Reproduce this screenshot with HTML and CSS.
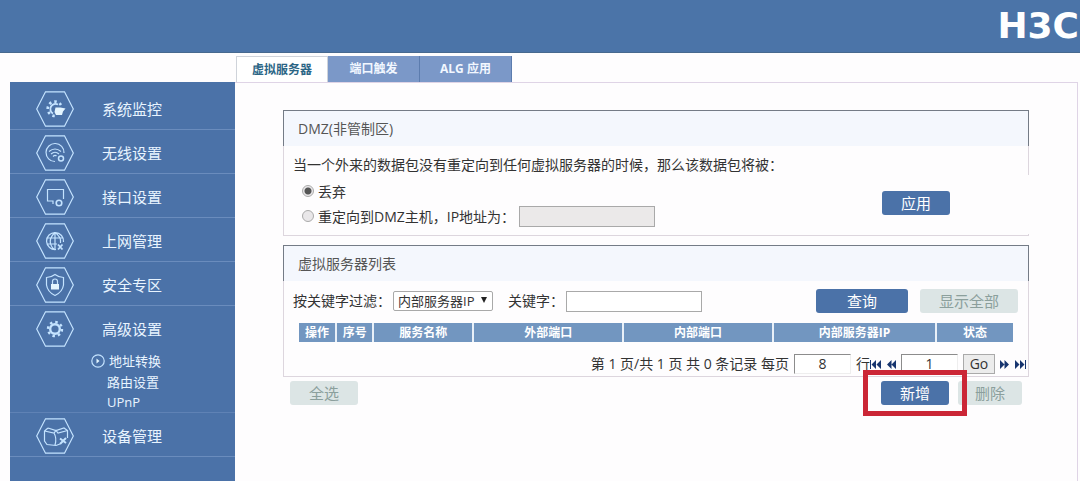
FILE: index.html
```html
<!DOCTYPE html>
<html lang="zh-CN">
<head>
<meta charset="utf-8">
<meta name="viewport" content="width=device-width, initial-scale=1">
<title>H3C</title>
<link rel="stylesheet" href="styles.css">
</head>
<body>
<svg width="0" height="0" class="defs" aria-hidden="true">
  <symbol id="hex" viewBox="0 0 38 36"><path d="M9.500 .8H28.500L37.300 18 28.500 35.200H9.500L.7 18Z"/></symbol>
  <symbol id="rewind" viewBox="0 0 9 9"><path d="M4.500 0V9L0 4.500ZM9 0V9L4.500 4.500Z"/></symbol>
  <symbol id="first" viewBox="0 0 11 9"><path d="M0 0H1V9H0ZM6 0V9L1.500 4.500ZM11 0V9L6.500 4.500Z"/></symbol>
</svg>
<header class="topbar"><span class="logo">H3C</span></header>
<nav class="tabs">
  <a href="#" class="tab active">虚拟服务器</a>
  <a href="#" class="tab">端口触发</a>
  <a href="#" class="tab">ALG 应用</a>
</nav>
<div class="layout">
  <nav class="sidebar">
    <a href="#" class="item">
      <svg class="hex" viewBox="0 0 38 36"><use href="#hex"/><path stroke-width="1.800" d="M22 13.500A5 5 0 1 0 17 22.500"/><path stroke-width="2.600" stroke-dasharray="2.400 3" d="M25 14A7.200 7.200 0 1 0 19 25"/><path class="solid" d="M19.500 16.500h5l5 1-2.500 3-1 3.500h-6l-1.500-3z"/></svg>
      <span>系统监控</span></a>
    <a href="#" class="item">
      <svg class="hex" viewBox="0 0 38 36"><use href="#hex"/><path d="M19 26.500A9 9 0 1 1 28 18M13 16.500Q19 11.500 25 16.500M15 19Q19 15.500 23 19M17 21.500Q19 19.500 20.500 21"/><circle cx="25" cy="23.500" r="2.500" stroke-width="1.500"/></svg>
      <span>无线设置</span></a>
    <a href="#" class="item">
      <svg class="hex" viewBox="0 0 38 36"><use href="#hex"/><path d="M17 25v-3h-5.500V10.500h16V20"/><circle cx="23" cy="24" r="2.800" stroke-width="1.600"/></svg>
      <span>接口设置</span></a>
    <a href="#" class="item">
      <svg class="hex" viewBox="0 0 38 36"><use href="#hex"/><path d="M20 26.500A8.500 8.500 0 1 1 27.500 19M19 9.500V26M11 15H27M11 21H21M19 9.500Q10 18 18 26.500M19 9.500Q25.500 14 24.500 20"/><path stroke-width="1.800" d="M22 21.500l4.500 5M26.500 21.500l-4.500 5"/></svg>
      <span>上网管理</span></a>
    <a href="#" class="item">
      <svg class="hex" viewBox="0 0 38 36"><use href="#hex"/><path d="M19 7.500Q23 10.500 27.500 10.500V18Q26.500 25 19 28.500 11.500 25 10.500 18V10.500Q15 10.500 19 7.500Z"/><path d="M16.500 17v-2.500a2.500 2.500 0 0 1 5 0V17"/><path class="solid" d="M15 17h8v5.500h-8z"/></svg>
      <span>安全专区</span></a>
    <div class="group">
      <a href="#" class="item">
        <svg class="hex" viewBox="0 0 38 36"><use href="#hex"/><circle cx="19" cy="18" r="4.800" stroke-width="2.400"/><circle cx="19" cy="18" r="7" stroke-width="2.400" stroke-dasharray="2.500 3"/></svg>
        <span>高级设置</span></a>
      <div class="subs">
        <a href="#" class="sub current"><svg class="play" viewBox="0 0 14 14"><circle cx="7" cy="7" r="6.200"/><path class="solid" d="M5.500 4.500L8.500 7 5.500 9.500Z"/></svg>地址转换</a>
        <a href="#" class="sub">路由设置</a>
        <a href="#" class="sub">UPnP</a>
      </div>
    </div>
    <a href="#" class="item">
      <svg class="hex" viewBox="0 0 38 36"><use href="#hex"/><path d="M12 10L20 12.500 28 10 31.500 12.500V20M12 10L8.500 13V23L11 26.500 20 27.500 24 26M8.500 13L18 15 20 12.500 22 15 31.500 12.500M18 15Q21 20 19 27"/><path stroke-width="2" d="M24 20.500l6 4.500M30 20l-6 6"/></svg>
      <span>设备管理</span></a>
  </nav>
  <main class="main">
    <section class="panel">
      <h2 class="title">DMZ(非管制区)</h2>
      <form class="dmz">
        <p class="intro">当一个外来的数据包没有重定向到任何虚拟服务器的时候<span class="mark">，</span>那么该数据包将被<span class="mark">：</span></p>
        <div class="choices">
          <label class="choice"><input type="radio" name="dmz" checked>丢弃</label>
          <div class="choice"><input type="radio" name="dmz" id="redirect"><label for="redirect">重定向到DMZ主机<span class="mark">，</span>IP地址为<span class="mark">：</span></label><input type="text" class="text" aria-label="IP地址" disabled></div>
        </div>
        <div class="apply"><button type="button" class="btn">应用</button></div>
      </form>
    </section>
    <section class="panel">
      <h2 class="title">虚拟服务器列表</h2>
      <form class="filter">
        <label for="field">按关键字过滤<span class="mark">：</span></label>
        <span class="select"><select id="field"><option>内部服务器IP</option></select></span>
        <label for="key" class="keylabel">关键字<span class="mark">：</span></label>
        <input type="text" id="key" class="text">
        <div class="actions">
          <button type="button" class="btn wide">查询</button>
          <button type="button" class="btn wide off">显示全部</button>
        </div>
      </form>
      <table class="list">
        <colgroup><col class="c-s"><col class="c-s"><col class="c-name"><col class="c-port"><col class="c-port"><col class="c-ip"><col></colgroup>
        <thead><tr><th>操作</th><th>序号</th><th>服务名称</th><th>外部端口</th><th>内部端口</th><th>内部服务器IP</th><th>状态</th></tr></thead>
      </table>
      <div class="pager">
        <label for="size">第 1 页/共 1 页 共 0 条记录 每页</label>
        <input type="text" id="size" class="num" value="8">
        <span class="rows">行</span>
        <a href="#" class="nav" aria-label="首页"><svg width="11" height="9"><use href="#first"/></svg></a>
        <a href="#" class="nav prev" aria-label="上一页"><svg width="9" height="9"><use href="#rewind"/></svg></a>
        <input type="text" class="num" value="1" aria-label="页码">
        <button type="button" class="go">Go</button>
        <a href="#" class="nav flip next" aria-label="下一页"><svg width="9" height="9"><use href="#rewind"/></svg></a>
        <a href="#" class="nav flip" aria-label="末页"><svg width="11" height="9"><use href="#first"/></svg></a>
      </div>
    </section>
    <div class="footer">
      <button type="button" class="btn off">全选</button>
      <div class="actions">
        <span class="marked"><button type="button" class="btn">新增</button></span>
        <button type="button" class="btn off">删除</button>
      </div>
    </div>
  </main>
</div>
</body>
</html>
```
FILE: styles.css
```css
* { box-sizing: border-box; }
body {
  margin: 0;
  min-height: 100vh;
  display: flex;
  flex-direction: column;
  background: #fefdfe;
  color: #333;
  font: 14px/20px "Open Sans", "Noto Sans CJK SC", sans-serif;
}
a { color: inherit; text-decoration: none; }
input, select, button { font: inherit; color: inherit; margin: 0; }
.defs { position: absolute; }
.mark { font-family: "Noto Sans CJK TC", sans-serif; line-height: 1; }

.topbar {
  height: 53px;
  display: flex;
  align-items: center;
  justify-content: flex-end;
  padding-right: 1px;
  background: #4b74a8;
  border-bottom: 1px solid #47698f;
}
.logo { font: bold 36px/48px "DejaVu Sans", sans-serif; color: #fff; }

.tabs {
  display: flex;
  padding: 3px 0 0 236px;
}
.tab {
  width: 92px;
  height: 26px;
  border-right: 1px solid #5c7cae;
  background: #7b98c8;
  color: #f2f7ff;
  font-size: 12px;
  line-height: 26px;
  font-weight: bold;
  text-align: center;
}
.tab.active { background: #fff; color: #2b6585; border: 1px solid #cfd3da; border-bottom: 0; }

.layout {
  flex: 1;
  display: grid;
  grid-template-columns: 225px 1fr;
  margin: 0 2px 0 10px;
}
.sidebar { background: #4b72a8; color: #e8f4ff; padding-top: 4px; }
.item {
  display: flex;
  align-items: center;
  gap: 28px;
  height: 44px;
  padding: 2px 0 0 26px;
  border-bottom: 1px solid #6a8cbd;
  font-size: 15px;
}
.hex { width: 38px; height: 36px; flex: none; }
.hex, .play { fill: none; stroke: #c4e3ff; stroke-width: 1.2; }
.solid { fill: #e4f5ff; stroke: none; }
.group { border-bottom: 1px solid #5f82b5; }
.group .item { border-bottom: 0; }
.subs { padding-left: 81px; }
.sub { display: flex; align-items: center; height: 20px; padding-left: 16px; font-size: 13px; }
.sub.current { padding-left: 0; gap: 4px; height: 22px; }
.play { width: 14px; height: 14px; }

.main {
  padding: 27px 48px 0 48px;
  border: 1px solid #dfd4e6;
  border-width: 1px 1px 0 0;
}
.panel { border: 1px solid #ddd6de; border-top: 0; margin-bottom: 9px; }
.title {
  margin: 0 -1px;
  height: 36px;
  padding: 0 14px;
  border: 1px solid #747b86;
  border-bottom: 0;
  background: #f4f7fd;
  color: #555;
  font-size: 14px;
  line-height: 36px;
  font-weight: normal;
}
.dmz { display: grid; grid-template-columns: 1fr 146px; grid-template-rows: 20px 1fr; padding: 9px 0 1px; height: 89px; }
.intro { grid-column: 1 / 3; margin: 0 0 0 9px; }
.choices { padding: 4px 0 0 18px; }
.choice { display: flex; align-items: center; height: 25px; }
.choice .text { margin-left: 4px; }
input[type="radio"] {
  appearance: none;
  width: 12px;
  height: 12px;
  margin: 0 4px 2px 0;
  border: 1px solid #aaa;
  border-radius: 50%;
  background: #e9e7e9;
}
input[type="radio"]:checked { background: radial-gradient(circle, #555 0 3px, #e9e7e9 4px); }
.text { width: 136px; height: 21px; border: 1px solid #a9a9a9; background: #fff; padding: 0 4px; }
.text:disabled { background: #ebe9e9; }
.apply { margin-right: -1px; padding-top: 16px; background: #fefdfe; }

.btn {
  width: 68px;
  height: 24px;
  padding: 0;
  border: 0;
  border-radius: 3px;
  background: #4b72a8;
  color: #fff;
  font-size: 15px;
  line-height: 24px;
}
.btn.wide { width: 92px; }
.btn.off { background: #dce5e5; color: #8b9f9c; }
.btn.wide.off { width: 98px; }

.filter { display: flex; align-items: center; padding: 8px 10px 0 9px; }
.select { position: relative; margin-left: 2px; }
.select select {
  appearance: none;
  display: block;
  width: 100px;
  height: 20px;
  padding: 0 4px;
  border: 1px solid #a9a9a9;
  border-radius: 2px;
  background: #fff;
  font-size: 13px;
  line-height: 18px;
}
.select::after {
  content: "";
  position: absolute;
  right: 6px;
  top: 6px;
  border: 3px solid transparent;
  border-top: 6px solid #222;
  border-bottom: 0;
  pointer-events: none;
}
.keylabel { margin: 0 2px 0 15px; }
.actions { margin-left: auto; display: flex; gap: 12px; }

.list {
  width: calc(100% - 30px);
  margin: 10px 15px 0;
  table-layout: fixed;
  border-collapse: collapse;
}
.list th {
  height: 19px;
  padding: 0;
  background: #7296c0;
  color: #fff;
  font-size: 12px;
  line-height: 19px;
}
.list th + th { border-left: 2px solid #e9f0f8; }
.c-s { width: 5.2%; }
.c-name { width: 14%; }
.c-port { width: 21%; }
.c-ip { width: 22.8%; }

.pager { display: flex; align-items: center; justify-content: flex-end; height: 34px; padding: 10px 2px 0 0; }
.num {
  width: 57px;
  height: 20px;
  margin-left: 5px;
  padding: 0;
  border: 1px solid #8c8c8c;
  border-color: #8c8c8c #eee #eee #8c8c8c;
  background: #fff;
  text-align: center;
}
.rows { margin-left: 5px; }
.nav { display: flex; fill: #17356f; }
.flip { transform: scaleX(-1); }
.prev { margin-left: 6px; }
.next { margin: 0 6px 0 5px; }
.go { width: 32px; height: 20px; margin-left: 5px; padding: 0; border: 1px solid #aaa; background: #ececec; line-height: 18px; }

.footer { display: flex; margin-top: -5px; padding: 0 7px; }
.footer .actions { gap: 9px; }
.footer .actions .off { width: 64px; }
.marked { position: relative; display: flex; }
.marked::after {
  content: "";
  position: absolute;
  z-index: 1;
  inset: -11px -18px;
  border: 5px solid #cb2636;
  pointer-events: none;
}
```
